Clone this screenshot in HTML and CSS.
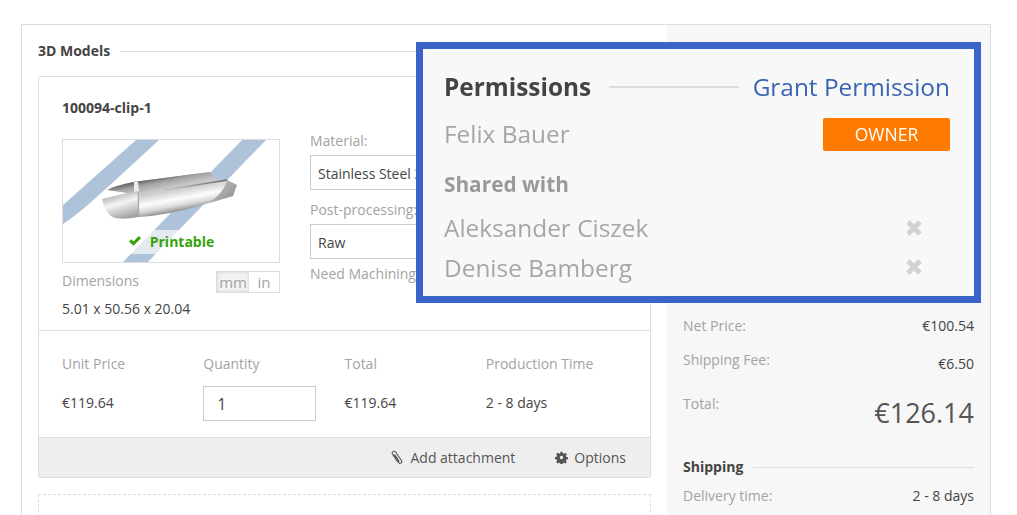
FILE: index.html
```html
<!DOCTYPE html>
<html lang="en">
<head>
<meta charset="utf-8">
<title>3D Models</title>
<link rel="stylesheet" href="styles.css">
</head>
<body>
<div class="frame">
  <main class="models">
    <div class="heading"><h2>3D Models</h2><span class="rule"></span></div>
    <section class="card">
      <div class="card-top">
        <h3>100094-clip-1</h3>
        <div class="config">
          <div class="preview-col">
            <div class="preview">
              <svg class="model" viewBox="0 0 216 122" width="216" height="122" aria-hidden="true">
                <defs>
                  <linearGradient id="upper" gradientUnits="userSpaceOnUse" x1="100" y1="37" x2="103" y2="52">
                    <stop offset="0" stop-color="#6a6a6a"/>
                    <stop offset="0.3" stop-color="#a4a4a4"/>
                    <stop offset="1" stop-color="#d8d8d8"/>
                  </linearGradient>
                  <linearGradient id="lower" gradientUnits="userSpaceOnUse" x1="110" y1="38" x2="117" y2="76">
                    <stop offset="0" stop-color="#b0b0b0"/>
                    <stop offset="0.32" stop-color="#d0d0d0"/>
                    <stop offset="0.56" stop-color="#fcfcfc"/>
                    <stop offset="0.72" stop-color="#dadada"/>
                    <stop offset="0.86" stop-color="#969696"/>
                  </linearGradient>
                  <linearGradient id="tip" x1="0.25" y1="0" x2="0.65" y2="1">
                    <stop offset="0" stop-color="#a0a0a0"/>
                    <stop offset="0.45" stop-color="#f4f4f4"/>
                    <stop offset="1" stop-color="#a0a0a0"/>
                  </linearGradient>
                  <linearGradient id="edge" x1="1" y1="0" x2="0" y2="0.2">
                    <stop offset="0" stop-color="#666"/>
                    <stop offset="1" stop-color="#bbb"/>
                  </linearGradient>
                  <linearGradient id="end" x1="0" y1="0" x2="1" y2="1">
                    <stop offset="0" stop-color="#c4c4c4"/>
                    <stop offset="1" stop-color="#8e8e8e"/>
                  </linearGradient>
                </defs>
                <path d="M0 65 L73 0 H96 L46 46 C28 62 14 75 0 84Z" fill="#aec3d9"/>
                <path d="M60 122 L179 0 H203 L85 122Z" fill="#aec3d9"/>
                <g class="part">
                  <path d="M70 42 L147 32 L152 39 L164 40 L174 45 L170 56 L139 65 C115 72 95 76 75 77 L72 60Z" fill="url(#lower)"/>
                  <path d="M44 50 C52 46 61 44 70 42 L147 32 L152 39 L100 50 L76 53 L64 53Z" fill="url(#upper)"/>
                  <path d="M164 40 L174 45 L170 56 L146 63 C156 56 162 48 164 40Z" fill="url(#end)"/>
                  <path d="M164 40 L102 50" stroke="url(#edge)" stroke-width="1.4" fill="none"/>
                  <path d="M39 59 L64 53 L75 52 L75 77 C66 79 58 79 52 78 C45 76 41 68 39 59Z" fill="url(#tip)"/>
                  <path d="M71 42 L75 41.5 L76 51 L71 52Z" fill="#ececec"/>
                  <path d="M75 52 L76 77" stroke="#a0a0a0" stroke-width="1" fill="none"/>
                </g>
              </svg>
              <div class="printable">
                <svg class="check" viewBox="0 0 14 12" width="14" height="12" aria-hidden="true"><path d="M1 6.5 L3.2 4.3 L5.4 6.5 L10.8 1 L13 3.2 L5.4 10.8Z" fill="#36a30b"/></svg>
                <span>Printable</span>
              </div>
            </div>
            <div class="dims-head">
              <span class="muted">Dimensions</span>
              <span class="units"><span class="unit active">mm</span><span class="unit">in</span></span>
            </div>
            <div class="dims">5.01 x 50.56 x 20.04</div>
          </div>
          <div class="options-col">
            <label class="muted">Material:</label>
            <div class="select">Stainless Steel 316L</div>
            <label class="muted">Post-processing:</label>
            <div class="select">Raw</div>
            <label class="muted machining">Need Machining?</label>
          </div>
        </div>
      </div>
      <div class="pricing">
        <div class="price-cell"><span class="muted">Unit Price</span><span class="value">€119.64</span></div>
        <div class="price-cell"><span class="muted">Quantity</span><span class="qty">1</span></div>
        <div class="price-cell"><span class="muted">Total</span><span class="value">€119.64</span></div>
        <div class="price-cell"><span class="muted">Production Time</span><span class="value">2 - 8 days</span></div>
      </div>
      <div class="actions">
        <span class="action">
          <svg viewBox="0 0 12 15" width="12" height="15" aria-hidden="true"><path d="M2.2 4.6 L7.6 12.6 C8.8 14.2 11.6 13 10.6 10.8 L4.6 2 C3.6 .7 1.4 1.2 1.2 2.8 C1.1 3.5 1.4 4.2 1.8 4.8 L6.6 11.6 C7.2 12.2 8.2 11.6 7.8 10.8 L3.6 4.6" fill="none" stroke="#555" stroke-width="1.1"/></svg>
          Add attachment
        </span>
        <span class="action gear">
          <svg viewBox="0 0 14 14" width="13" height="13" aria-hidden="true"><path fill-rule="evenodd" d="M5.8 0h2.4l.4 2 1.3.6 1.8-1.1 1.7 1.7-1.1 1.8.6 1.3 2 .4v2.4l-2 .4-.6 1.3 1.1 1.8-1.7 1.7-1.8-1.1-1.3.6-.4 2H5.8l-.4-2-1.3-.6-1.8 1.1L.6 12.5l1.1-1.8-.6-1.3-2-.4V6.6l2-.4.6-1.3L.6 3.1l1.7-1.7 1.8 1.1 1.3-.6zM7 5a2 2 0 1 0 0 4 2 2 0 0 0 0-4z" transform="translate(0.7 0.7) scale(0.9)" fill="#555"/></svg>
          Options
        </span>
      </div>
    </section>
    <div class="dropzone"></div>
  </main>
  <aside class="summary">
    <div class="summary-spacer"></div>
    <div class="line net"><span class="muted">Net Price:</span><span class="value">€100.54</span></div>
    <div class="line fee"><span class="muted">Shipping Fee:</span><span class="value low">€6.50</span></div>
    <div class="line total"><span class="muted">Total:</span><span class="grand">€126.14</span></div>
    <div class="heading ship"><h2>Shipping</h2><span class="rule"></span></div>
    <div class="line"><span class="muted">Delivery time:</span><span class="value">2 - 8 days</span></div>
  </aside>
</div>
<div class="callout">
  <div class="callout-head"><h2>Permissions</h2><span class="rule"></span><a class="grant">Grant Permission</a></div>
  <div class="person owner"><span>Felix Bauer</span><span class="badge">OWNER</span></div>
  <h3 class="shared">Shared with</h3>
  <div class="person shared-row first"><span>Aleksander Ciszek</span><svg class="remove" viewBox="1 1 14 14" width="16" height="16" aria-hidden="true"><path d="M1.2 4.2 L4.2 1.2 L8 5 L11.8 1.2 L14.8 4.2 L11 8 L14.8 11.8 L11.8 14.8 L8 11 L4.2 14.8 L1.2 11.8 L5 8Z" fill="#d2d2d2"/></svg></div>
  <div class="person shared-row"><span>Denise Bamberg</span><svg class="remove" viewBox="1 1 14 14" width="16" height="16" aria-hidden="true"><path d="M1.2 4.2 L4.2 1.2 L8 5 L11.8 1.2 L14.8 4.2 L11 8 L14.8 11.8 L11.8 14.8 L8 11 L4.2 14.8 L1.2 11.8 L5 8Z" fill="#d2d2d2"/></svg></div>
</div>
</body>
</html>
```
FILE: styles.css
```css
html, body { margin: 0; height: 515px; overflow: hidden; background: #fff; }
body { font-family: "Open Sans", sans-serif; font-size: 14px; color: #444; position: relative; padding: 24px 26px 0 21px; box-sizing: border-box; }
h2, h3 { margin: 0; }
.frame { display: flex; border: 1px solid #ddd; border-bottom: 0; height: 491px; box-sizing: border-box; overflow: hidden; }
.models { width: 645px; box-sizing: border-box; padding: 15px 16px 0; flex: none; }
.heading { display: flex; align-items: center; gap: 10px; height: 22px; }
.heading h2 { font-size: 14px; font-weight: 700; color: #444; line-height: 22px; }
.rule { flex: 1; height: 1px; background: #ddd; }
.card { margin-top: 14px; border: 1px solid #ddd; border-radius: 2px; height: 402px; box-sizing: border-box; display: flex; flex-direction: column; }
.card-top { height: 254px; box-sizing: border-box; padding: 21px 23px 0; border-bottom: 1px solid #ddd; }
.card-top h3 { font-size: 14px; font-weight: 700; color: #444; line-height: 20px; }
.config { display: flex; gap: 30px; margin-top: 21px; }
.preview-col { width: 218px; flex: none; }
.preview { position: relative; width: 218px; height: 124px; border: 1px solid #ddd; box-sizing: border-box; }
.model { display: block; }
.part { filter: blur(.35px); }
.printable { position: absolute; left: 0; right: 0; top: 90px; height: 24px; display: flex; align-items: center; gap: 8px; justify-content: center; padding-bottom: 2px; box-sizing: border-box; font-size: 14px; font-weight: 700; color: #36a30b; white-space: nowrap; background: rgba(255,255,255,.65); }
.check { flex: none; }
.muted { color: #a3a3a3; font-size: 14px; }
.dims-head { display: flex; justify-content: space-between; align-items: flex-start; margin-top: 8px; line-height: 20px; }
.units { display: flex; border: 1px solid #ddd; height: 22px; box-sizing: border-box; font-size: 15px; color: #a3a3a3; line-height: 21px; }
.unit { padding: 0 8.5px; }
.unit.active { padding: 0 2px; background: #f2f2f2; box-shadow: inset 0 0 3px #ccc; }
.dims { margin-top: 6px; font-size: 14px; line-height: 20px; color: #444; }
.options-col { display: flex; flex-direction: column; width: 317px; margin-top: -8px; }
.options-col label { line-height: 20px; margin-bottom: 4px; }
.options-col .machining { margin-top: -5px; }
.select { height: 35px; box-sizing: border-box; border: 1px solid #ccc; padding-left: 7px; line-height: 36px; font-size: 14px; color: #444; margin-bottom: 10px; }
.pricing { display: flex; padding: 23px 23px 0; height: 106px; box-sizing: border-box; }
.price-cell { width: 141.5px; display: flex; flex-direction: column; }
.price-cell .muted { line-height: 20px; }
.price-cell .value { margin-top: 19px; line-height: 20px; font-size: 14px; color: #444; }
.qty { margin-top: 12px; width: 113px; height: 35px; box-sizing: border-box; border: 1px solid #ccc; padding-left: 13px; line-height: 35px; font-size: 16px; color: #444; }
.actions { flex: 1; background: #eee; border-top: 1px solid #ddd; display: flex; justify-content: flex-end; align-items: center; gap: 40px; padding-right: 24px; border-radius: 0 0 2px 2px; }
.action { display: flex; align-items: center; gap: 7px; font-size: 14px; color: #555; }
.action.gear { gap: 6px; }
.dropzone { margin-top: 16px; height: 60px; border: 1px dashed #ddd; }
.summary { flex: 1; background: #f7f7f7; padding: 0 16px; box-sizing: border-box; }
.summary-spacer { height: 291px; }
.line { display: flex; justify-content: space-between; line-height: 20px; font-size: 14px; }
.line .value { font-size: 14px; color: #444; }
.value.low { margin-top: 4px; }
.fee { margin-top: 14px; }
.total { margin-top: 20px; height: 42px; }
.grand { font-size: 27px; line-height: 38px; color: #555; }
.summary .heading { margin-top: 20px; }
.ship + .line { margin-top: 8px; }
.callout { position: absolute; left: 416px; top: 42px; width: 565px; height: 261px; box-sizing: border-box; border: 7px solid #3a64c9; background: #f8f8f8; padding: 21px 24px 0 21px; }
.callout-head { display: flex; align-items: center; height: 32px; filter: blur(.3px); }
.callout-head h2 { font-size: 24.4px; font-weight: 700; color: #444; }
.callout-head .rule { height: 2px; margin: 2px 14px 0 18px; background: #ddd; }
.grant { font-size: 24.4px; color: #3a64b4; }
.person { display: flex; justify-content: space-between; align-items: center; font-size: 24.4px; color: #a6a6a6; filter: blur(.3px); }
.owner { height: 32px; margin-top: 15px; }
.badge { width: 127px; height: 33px; margin-top: 2px; background: #ff7a00; color: #fff; font-size: 17.5px; line-height: 33px; text-align: center; border-radius: 2px; }
.shared { font-size: 20.8px; font-weight: 700; color: #999; margin-top: 21px; line-height: 28px; filter: blur(.3px); }
.shared-row { height: 39.5px; }
.shared-row.first { margin-top: 10px; }
.remove { margin-right: 28px; }
```
